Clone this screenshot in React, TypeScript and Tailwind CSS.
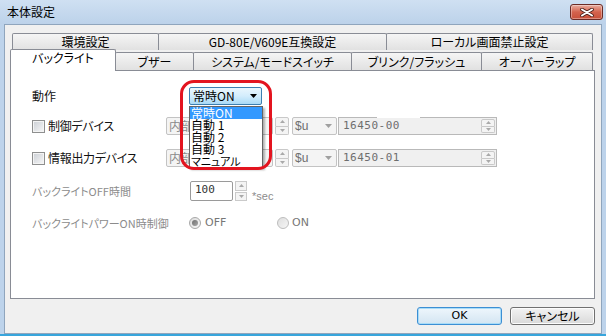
import React from "react";

const font = "font-['Noto_Sans_CJK_JP','Noto_Sans_CJK_SC',sans-serif] [font-feature-settings:'palt']";

function Spinner({ h }: { h: string }) {
  return (
    <div className={`flex flex-col w-[14px] ${h}`}>
      <div className="flex-1 border border-[#c9c9c9] bg-[#f4f4f4] flex items-center justify-center rounded-t-[2px]">
        <svg width="5" height="3" viewBox="0 0 5 3"><path d="M0 3 L2.5 0 L5 3 Z" fill="#a9a9a9" /></svg>
      </div>
      <div className="flex-1 border border-t-0 border-[#c9c9c9] bg-[#f4f4f4] flex items-center justify-center rounded-b-[2px]">
        <svg width="5" height="3" viewBox="0 0 5 3"><path d="M0 0 L2.5 3 L5 0 Z" fill="#a9a9a9" /></svg>
      </div>
    </div>
  );
}

function GreyArrow() {
  return (
    <svg width="7" height="4" viewBox="0 0 7 4"><path d="M0 0 L3.5 4 L7 0 Z" fill="#a0a0a0" /></svg>
  );
}

function Checkbox() {
  return (
    <div className="w-[13px] h-[13px] border border-[#8e8f8f] bg-linear-to-br from-[#cbcfd5] to-[#f7f7f7] shadow-[inset_0_0_0_1px_#f4f4f4]" />
  );
}

function DeviceRow({ label, value, gap }: { label: string; value: string; gap?: boolean }) {
  return (
    <div className="flex items-center h-[18px]">
      <div className="flex items-center w-[134px]">
        <Checkbox />
        <span className="ml-[3px] text-[#111] leading-[12px] tracking-[-0.3px]">{label}</span>
      </div>
      <div className="w-[107px] h-[18px] border border-[#c3c3c3] bg-[#f4f4f4] rounded-[2px] flex items-center pl-[2px] text-[#8a8a8a] leading-[12px]">
        内部
      </div>
      <div className="ml-[2px]">
        <Spinner h="h-[18px]" />
      </div>
      <div className="ml-[3px] w-[45px] h-[18px] border border-[#c3c3c3] bg-[#f4f4f4] rounded-[2px] flex items-center justify-between pl-[2px] pr-[4px] text-[#6e6e6e] leading-[12px] font-['Liberation_Sans',sans-serif]">
        <span>$u</span>
        <GreyArrow />
      </div>
      <div className="ml-[1px] relative w-[159px] h-[18px] border border-[#b9b9b9] bg-[#f0f0f0] flex items-center justify-between pl-[4px] pr-[1px] text-[#6e6e6e] leading-[12px]">
        <span className="font-['DejaVu_Sans_Mono',monospace] text-[11px] tracking-[0.5px]">{value}</span>
        <Spinner h="h-[14px]" />
        {gap && <div className="absolute left-[38px] top-[-1px] w-[43px] h-[1px] bg-white" />}
      </div>
    </div>
  );
}

export default function App() {
  return (
    <div className={`${font} text-[12px] w-[606px] h-[336px] bg-[#bdd3eb] flex flex-col overflow-hidden border-b-2 border-b-[#37a5dc]`}>
      {/* Title bar */}
      <div className="h-[24px] shrink-0 flex items-center justify-between pl-[7px] pr-[3px] bg-linear-to-b from-[#cfe0f2] to-[#bcd2ea]">
        <span className="text-black leading-[12px]">本体設定</span>
        <div className="w-[33px] h-[16px] rounded-[3px] border border-[#6b2b25] bg-linear-to-b from-[#e8ada0] via-[#d4634e] to-[#c8503a] flex items-center justify-center shadow-[inset_0_0_0_1px_rgba(255,255,255,0.35)]">
          <svg width="14" height="9" viewBox="0 0 14 9">
            <path d="M2 1.5 L12 7.5 M12 1.5 L2 7.5" stroke="#4a1e18" strokeWidth="3.6" strokeLinecap="round" />
            <path d="M2 1.5 L12 7.5 M12 1.5 L2 7.5" stroke="#ffffff" strokeWidth="2" strokeLinecap="round" />
          </svg>
        </div>
      </div>

      {/* Body */}
      <div className="h-[310px] mx-[4px] bg-[#f0f0f0] border border-[#8fa5bd] flex flex-col pl-[5px] pr-[6px] pt-[8px]">
        {/* Tabs row 1 */}
        <div className="flex h-[17px] pl-[2px]">
          <div className="w-[147px] h-[17px] border border-b-0 border-[#898c95] rounded-t-[2px] bg-linear-to-b from-[#f5f5f5] to-[#e1e1e1] flex items-center justify-center text-black leading-[12px]">環境設定</div>
          <div className="-ml-px w-[229px] h-[17px] border border-b-0 border-[#898c95] rounded-t-[2px] bg-linear-to-b from-[#f5f5f5] to-[#e1e1e1] flex items-center justify-center text-black leading-[12px]">GD-80E/V609E互換設定</div>
          <div className="-ml-px w-[207px] h-[17px] border border-b-0 border-[#898c95] rounded-t-[2px] bg-linear-to-b from-[#f5f5f5] to-[#e1e1e1] flex items-center justify-center text-black leading-[12px]">ローカル画面禁止設定</div>
        </div>
        {/* Tabs row 2 */}
        <div className="flex items-end h-[21px] -mt-px">
          <div className="relative z-10 w-[106px] h-[22px] -mb-px border border-b-0 border-[#898c95] rounded-t-[2px] bg-white flex items-start justify-center pt-[2px] text-black leading-[12px]">バックライト</div>
          <div className="-ml-px w-[79px] h-[18px] border border-b-0 border-[#898c95] rounded-t-[2px] bg-linear-to-b from-[#f5f5f5] to-[#e1e1e1] flex items-center justify-center text-black leading-[12px]">ブザー</div>
          <div className="-ml-px w-[159px] h-[18px] border border-b-0 border-[#898c95] rounded-t-[2px] bg-linear-to-b from-[#f5f5f5] to-[#e1e1e1] flex items-center justify-center text-black leading-[12px]">システム/モードスイッチ</div>
          <div className="-ml-px w-[131px] h-[18px] border border-b-0 border-[#898c95] rounded-t-[2px] bg-linear-to-b from-[#f5f5f5] to-[#e1e1e1] flex items-center justify-center text-black leading-[12px]">ブリンク/フラッシュ</div>
          <div className="-ml-px w-[112px] h-[18px] border border-b-0 border-[#898c95] rounded-t-[2px] bg-linear-to-b from-[#f5f5f5] to-[#e1e1e1] flex items-center justify-center text-black leading-[12px]">オーバーラップ</div>
        </div>

        {/* Panel */}
        <div className="relative h-[229px] shrink-0 bg-white border border-[#898c95] pl-[21px] pt-[16px]">
          {/* 動作 */}
          <div className="flex items-center h-[18px]">
            <span className="w-[157px] text-[#111] leading-[12px]">動作</span>
            <div className="w-[73px] h-[18px] rounded-[2px] border border-[#3c7fb1] bg-linear-to-b from-[#eaf6fd] via-[#d3edfc] to-[#a9daf6] flex items-center justify-between pl-[3px] pr-[4px] text-black leading-[12px]">
              <span>常時ON</span>
              <svg width="7" height="4" viewBox="0 0 7 4"><path d="M0 0 L3.5 4 L7 0 Z" fill="#000" /></svg>
            </div>
          </div>

          <div className="mt-[12px]">
            <DeviceRow label="制御デバイス" value="16450-00" gap />
          </div>
          <div className="mt-[14px]">
            <DeviceRow label="情報出力デバイス" value="16450-01" />
          </div>

          {/* バックライトOFF時間 */}
          <div className="mt-[14px] flex items-center h-[20px]">
            <span className="w-[158px] text-[#8c8c8c] leading-[12px] text-[11px]">バックライトOFF時間</span>
            <div className="w-[43px] h-[20px] border border-[#9a9a9a] rounded-[2px] bg-white flex items-start pt-[2px] pl-[4px] text-[#333] leading-[12px] font-['DejaVu_Sans_Mono',monospace] text-[11px]">100</div>
            <div className="ml-[2px] w-[12px] h-[20px] flex flex-col gap-[1px]">
              <div className="flex-1 border border-[#cacaca] bg-[#f4f4f4] flex items-center justify-center">
                <svg width="5" height="3" viewBox="0 0 5 3"><path d="M0 3 L2.5 0 L5 3 Z" fill="#a9a9a9" /></svg>
              </div>
              <div className="flex-1 border border-[#cacaca] bg-[#f4f4f4] flex items-center justify-center">
                <svg width="5" height="3" viewBox="0 0 5 3"><path d="M0 0 L2.5 3 L5 0 Z" fill="#a9a9a9" /></svg>
              </div>
            </div>
            <span className="ml-[5px] self-end text-[#8c8c8c] leading-[12px] font-['Liberation_Sans',sans-serif] text-[11px] mb-[-1px]">*sec</span>
          </div>

          {/* Radio row */}
          <div className="mt-[14px] flex items-center h-[16px]">
            <span className="w-[157px] text-[#8c8c8c] leading-[12px] text-[11px]">バックライトパワーON時制御</span>
            <div className="w-[88px] flex items-center">
              <div className="w-[12px] h-[12px] rounded-full border border-[#a8a8a8] bg-linear-to-br from-[#dcdcdc] to-[#f8f8f8] flex items-center justify-center">
                <div className="w-[6px] h-[6px] rounded-full bg-linear-to-br from-[#6f6f6f] to-[#a8a8a8]" />
              </div>
              <span className="ml-[4px] text-[#777] leading-[12px] font-['DejaVu_Sans',sans-serif] text-[11px]">OFF</span>
            </div>
            <div className="w-[12px] h-[12px] rounded-full border border-[#bdbdbd] bg-linear-to-br from-[#dedede] to-[#f6f6f6]" />
            <span className="ml-[3px] text-[#777] leading-[12px] font-['DejaVu_Sans',sans-serif] text-[11px]">ON</span>
          </div>

          {/* Dropdown list (overlay) */}
          <div className="absolute left-[178px] top-[35px] w-[74px] h-[62px] z-20 bg-white border border-[#646464] shadow-[2px_2px_2px_rgba(0,0,0,0.3)] flex flex-col leading-[12px] text-black">
            <div className="h-[12px] bg-[#3399ff] text-white pl-[1px]">常時ON</div>
            <div className="h-[12px] pl-[1px]">自動 1</div>
            <div className="h-[12px] pl-[1px]">自動 2</div>
            <div className="h-[12px] pl-[1px]">自動 3</div>
            <div className="h-[12px] pl-[1px] text-[11px]">マニュアル</div>
          </div>

          {/* Red highlight */}
          <div className="absolute left-[169px] top-[9px] w-[92px] h-[90px] z-30 border-[3px] border-[#e3141f] rounded-[14px]" />
        </div>

        {/* Buttons */}
        <div className="mt-[8px] h-[18px] flex justify-end gap-[8px]">
          <div className="w-[85px] h-[18px] rounded-[3px] border border-[#3c8fd4] shadow-[inset_0_0_0_1px_#a8dcf8] bg-linear-to-b from-[#eef6fc] to-[#d3e5f2] flex items-center justify-center text-black leading-[12px] font-['DejaVu_Sans',sans-serif] text-[11px]">OK</div>
          <div className="w-[85px] h-[18px] rounded-[3px] border border-[#707070] shadow-[inset_0_0_0_1px_#fcfcfc] bg-linear-to-b from-[#f3f3f3] to-[#d9d9d9] flex items-center justify-center text-black leading-[12px]">キャンセル</div>
        </div>
      </div>
    </div>
  );
}
